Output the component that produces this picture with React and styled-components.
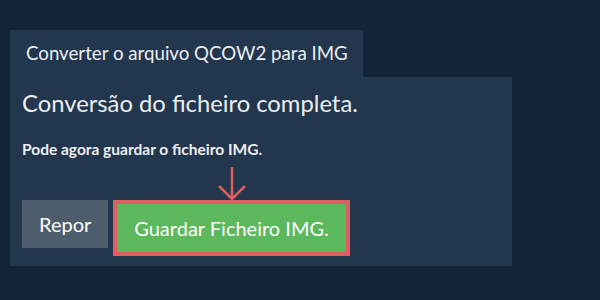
import React from "react";
import styled, { createGlobalStyle } from "styled-components";

const GlobalStyle = createGlobalStyle`
  html, body {
    margin: 0;
    padding: 0;
    background: #13243a;
    font-family: Lato, "Open Sans", sans-serif;
  }
`;

const Page = styled.div`
  width: 600px;
  height: 300px;
  box-sizing: border-box;
  padding: 30px 10px 0 10px;
  background: #13243a;
`;

const Tab = styled.div`
  display: inline-block;
  height: 47px;
  line-height: 46px;
  padding: 0 15px 0 16px;
  background: #22364d;
  color: #eceef0;
  font-size: 18.7px;
`;

const Panel = styled.div`
  width: 502px;
  height: 189px;
  box-sizing: border-box;
  padding: 10px 12px 0 12px;
  background: #22364d;
`;

const Heading = styled.h2`
  margin: 0;
  font-weight: 400;
  font-size: 23.8px;
  line-height: 32px;
  color: #eceef0;
`;

const Note = styled.p`
  margin: 20px 0 0 0;
  font-weight: 700;
  font-size: 15.5px;
  line-height: 20px;
  color: #eceef0;
`;

const Actions = styled.div`
  display: flex;
  align-items: flex-start;
  gap: 5px;
  margin-top: 41px;
`;

const Button = styled.button`
  border: none;
  margin: 0;
  height: 48px;
  padding: 0 17px;
  font-family: inherit;
  font-size: 20px;
  color: #ffffff;
  background: ${({ $variant }) => ($variant === "success" ? "#5cb85c" : "#4e5d6c")};
  cursor: pointer;
`;

const Highlight = styled.div`
  position: relative;
  border: 4px solid #df5e5e;
  display: flex;
`;

const Arrow = styled.svg`
  position: absolute;
  left: 50%;
  top: -38px;
  transform: translateX(-50%);
`;

const App = () => {
  return (
    <>
      <GlobalStyle />
      <Page>
        <Tab>Converter o arquivo QCOW2 para IMG</Tab>
        <Panel>
          <Heading>Conversão do ficheiro completa.</Heading>
          <Note>Pode agora guardar o ficheiro IMG.</Note>
          <Actions>
            <Button>Repor</Button>
            <Highlight>
              <Arrow width="30" height="36" viewBox="0 0 30 36">
                <path
                  d="M15 1 V33 M2 20 L15 33 L28 20"
                  fill="none"
                  stroke="#df5e5e"
                  strokeWidth="2.5"
                />
              </Arrow>
              <Button $variant="success">Guardar Ficheiro IMG.</Button>
            </Highlight>
          </Actions>
        </Panel>
      </Page>
    </>
  );
};

export default App;
